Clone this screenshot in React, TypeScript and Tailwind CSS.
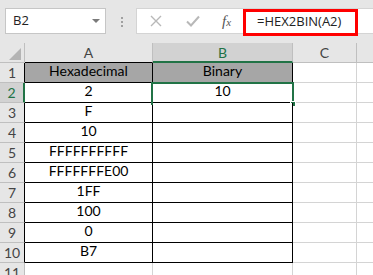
import React from "react";

const rows = [
  { n: 1, a: "Hexadecimal", b: "Binary", head: true },
  { n: 2, a: "2", b: "10" },
  { n: 3, a: "F", b: "" },
  { n: 4, a: "10", b: "" },
  { n: 5, a: "FFFFFFFFFF", b: "" },
  { n: 6, a: "FFFFFFFE00", b: "" },
  { n: 7, a: "1FF", b: "" },
  { n: 8, a: "100", b: "" },
  { n: 9, a: "0", b: "" },
  { n: 10, a: "B7", b: "" },
];

const Toolbar: React.FC = () => (
  <div className="flex h-[43px] items-start bg-[#e6e6e6] pt-[8px] font-['Open_Sans',sans-serif]">
    <div className="ml-[5px] flex h-[26px] w-[101px] items-center justify-between border border-[#c6c6c6] bg-white pl-[7px] pr-[5px]">
      <span className="text-[13px] text-[#222]">B2</span>
      <span className="h-0 w-0 border-x-[4px] border-t-[4px] border-x-transparent border-t-[#7a7a7a]" />
    </div>
    <div className="ml-[15px] mt-[9px] flex flex-col gap-[2px]">
      <span className="h-[2px] w-[2px] bg-[#a0a0a0]" />
      <span className="h-[2px] w-[2px] bg-[#a0a0a0]" />
      <span className="h-[2px] w-[2px] bg-[#a0a0a0]" />
    </div>
    <div className="ml-[13px] flex h-[26px] flex-1 items-center border-y border-l border-[#d4d4d4] bg-white">
      <svg width="12" height="12" viewBox="0 0 12 12" className="ml-[13px]">
        <path d="M1 1 L11 11 M11 1 L1 11" stroke="#b8b8b8" strokeWidth="1.4" fill="none" />
      </svg>
      <svg width="14" height="12" viewBox="0 0 14 12" className="ml-[24px]">
        <path d="M1 6.5 L5 10.5 L13 1.5" stroke="#b8b8b8" strokeWidth="2" fill="none" />
      </svg>
      <span className="ml-[22px] font-['Liberation_Serif',serif] text-[15px] italic text-[#555]">
        f<span className="text-[11px]">x</span>
      </span>
      <div className="ml-[12px] flex h-[27px] w-[115px] translate-y-[1px] items-center border-[3px] border-[#ff0000] pl-[11px] text-[13px] text-[#222]">
        =HEX2BIN(A2)
      </div>
    </div>
  </div>
);

const ColumnHeaders: React.FC = () => (
  <div className="flex h-[20px] bg-[#e6e6e6] font-['Lato',sans-serif] text-[14px] text-[#444]">
    <div className="flex w-[25px] items-end justify-end border-r border-b border-[#bfbfbf] pb-[2px] pr-[3px]">
      <svg width="12" height="12" viewBox="0 0 12 12">
        <path d="M12 0 L12 12 L0 12 Z" fill="#b4b4b4" />
      </svg>
    </div>
    <div className="flex w-[128px] items-center justify-center border-r border-b border-[#bfbfbf] border-b-black">
      A
    </div>
    <div className="flex w-[140px] items-center justify-center border-r border-b-2 border-[#bfbfbf] border-b-[#217346] bg-[#d2d2d2] text-[#217346]">
      B
    </div>
    <div className="flex w-[64px] items-center justify-center border-r border-b border-[#bfbfbf]">
      C
    </div>
    <div className="flex-1 border-b border-[#bfbfbf]" />
  </div>
);

const Row: React.FC<{ n: number; a?: string; b?: string; head?: boolean; inTable: boolean }> = ({
  n,
  a,
  b,
  head,
  inTable,
}) => {
  const selected = n === 2;
  const cellBorder = inTable ? "border-black" : "border-[#d4d4d4]";
  const fill = head ? "bg-[#a6a6a6]" : "bg-white";
  return (
    <div className="flex h-[20px] font-['Lato',sans-serif] text-[14px] text-black">
      <div
        className={
          selected
            ? "flex w-[25px] items-center justify-center border-r-2 border-b border-r-[#217346] border-b-[#bfbfbf] bg-[#d2d2d2] text-[#217346]"
            : inTable
            ? "flex w-[25px] items-center justify-center border-r border-b border-r-black border-b-[#bfbfbf] bg-[#e6e6e6] text-[#444]"
            : "flex w-[25px] items-center justify-center border-r border-b border-[#bfbfbf] bg-[#e6e6e6] text-[#444]"
        }
      >
        {n}
      </div>
      <div className={`flex w-[128px] items-end justify-center border-r border-b pb-[1px] ${cellBorder} ${fill}`}>
        {a}
      </div>
      <div className={`relative flex w-[140px] items-end justify-center border-r border-b pb-[1px] ${cellBorder} ${fill}`}>
        {b}
        {selected && (
          <div className="absolute -left-[2px] -top-[1px] h-[23px] w-[143px] border-2 border-[#217346]">
            <span className="absolute -bottom-[4px] -right-[4px] h-[6px] w-[6px] border border-white bg-[#217346]" />
          </div>
        )}
      </div>
      <div className="w-[64px] border-r border-b border-[#d4d4d4] bg-white" />
      <div className="flex-1 border-b border-[#d4d4d4] bg-white" />
    </div>
  );
};

const App: React.FC = () => {
  return (
    <div className="h-[275px] w-[373px] overflow-hidden bg-white">
      <Toolbar />
      <ColumnHeaders />
      {rows.map((r) => (
        <Row key={r.n} {...r} inTable />
      ))}
      <Row n={11} inTable={false} />
    </div>
  );
};

export default App;
